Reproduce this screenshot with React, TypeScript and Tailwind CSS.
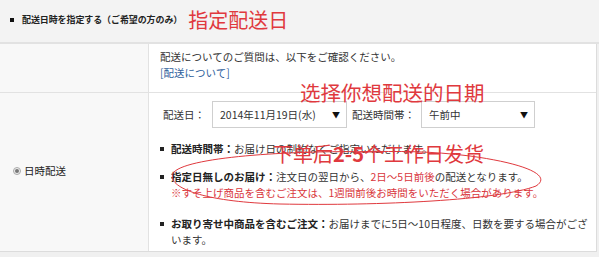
const jp = { fontFamily: '"Noto Sans CJK JP", "Liberation Sans", sans-serif' };

function Bullet({ children }: { children: React.ReactNode }) {
  return (
    <div className="flex">
      <span className="w-[11px] shrink-0 flex pt-[6px]">
        <span className="w-[4px] h-[4px] bg-[#222]" />
      </span>
      <div>{children}</div>
    </div>
  );
}

function FakeSelect({ w, value }: { w: string; value: string }) {
  return (
    <div className={`${w} h-[27px] border border-[#cfcfcf] bg-white flex items-center justify-between pl-[7px] pr-[6px]`}>
      <span>{value}</span>
      <span className="text-[8px] text-[#111]">▼</span>
    </div>
  );
}

export default function App() {
  return (
    <div
      className="relative w-[599px] h-[257px] overflow-hidden bg-[#f0f0f0] text-[10.5px] leading-[16px] text-[#333]"
      style={jp}
    >
      {/* section header */}
      <div className="h-[44px] bg-[#f3f3f3] border-b-2 border-[#e2e2e2] flex items-center pl-[10px] pb-[2px]">
        <span className="w-[4px] h-[4px] bg-[#111] mr-[8px]" />
        <span className="text-[9px] font-bold text-[#222] tracking-[-0.1px]">配送日時を指定する（ご希望の方のみ）</span>
        <span
          className="ml-[6px] text-[20px] leading-[24px] text-[#e0393e]"
          style={{ fontFamily: '"Noto Sans CJK SC", sans-serif' }}
        >
          指定配送日
        </span>
      </div>

      <div className="mr-[2px] border-r border-[#dcdcdc] bg-white">
        {/* row 1 */}
        <div className="flex h-[49px] border-b border-[#e2e2e2]">
          <div className="w-[149px] shrink-0 bg-[#f8f8f8] border-r border-[#e2e2e2]" />
          <div className="flex-1 pl-[11px] pt-[5px]">
            <div>配送についてのご質問は、以下をご確認ください。</div>
            <div className="text-[#2f5f9c]">[配送について]</div>
          </div>
        </div>

        {/* row 2 */}
        <div className="flex h-[159px] border-b border-[#dcdcdc]">
          <div className="w-[149px] shrink-0 bg-[#f8f8f8] border-r border-[#e2e2e2] flex items-center pl-[13px] pb-[2px]">
            <span className="w-[8px] h-[8px] rounded-full border border-[#aaa] bg-[#eee] flex items-center justify-center mr-[3px]">
              <span className="w-[4px] h-[4px] rounded-full bg-[#777]" />
            </span>
            <span className="text-[#222]">日時配送</span>
          </div>
          <div className="flex-1 pl-[11px] pt-[8px]">
            <div className="flex items-center">
              <span className="ml-[3px] mr-[7px]">配送日：</span>
              <FakeSelect w="w-[135px]" value="2014年11月19日(水)" />
              <span className="ml-[5px] mr-[6px]">配送時間帯：</span>
              <FakeSelect w="w-[114px]" value="午前中" />
            </div>
            <div className="mt-[13px]">
              <Bullet>
                <b className="text-[#222]">配送時間帯：</b>お届け日の制約なくご指定いただけます。
              </Bullet>
            </div>
            <div className="mt-[12px]">
              <Bullet>
                <b className="text-[#222]">指定日無しのお届け：</b>注文日の翌日から、
                <span className="text-[#d9363c]">2日〜5日前後</span>の配送となります。
                <div className="text-[#d9363c]">※すそ上げ商品を含むご注文は、1週間前後お時間をいただく場合があります。</div>
              </Bullet>
            </div>
            <div className="mt-[15px] pr-[8px]">
              <Bullet>
                <b className="text-[#222]">お取り寄せ中商品を含むご注文：</b>お届けまでに5日〜10日程度、日数を要する場合がございます。
              </Bullet>
            </div>
          </div>
        </div>
      </div>

      {/* handwritten annotations */}
      <div
        className="absolute left-[300px] top-[80px] text-[20.5px] leading-[24px] text-[#e0393e]"
        style={{ fontFamily: '"Noto Sans CJK SC", sans-serif' }}
      >
        选择你想配送的日期
      </div>
      <div
        className="absolute left-[273px] top-[142px] text-[20px] leading-[24px] text-[#e0393e]"
        style={{ fontFamily: '"Noto Sans CJK SC", sans-serif' }}
      >
        下单后<span className="font-bold">2-5</span>个工作日发货
      </div>
      <svg className="absolute left-0 top-0 pointer-events-none" width="599" height="257">
        <path
          d="M 380 152 C 300 150, 190 156, 174 172 C 164 186, 200 202, 280 204 C 380 206, 500 200, 536 186 C 552 176, 528 164, 470 156 C 430 151, 400 151, 360 152"
          fill="none"
          stroke="#e0393e"
          strokeWidth="1"
        />
      </svg>
    </div>
  );
}
